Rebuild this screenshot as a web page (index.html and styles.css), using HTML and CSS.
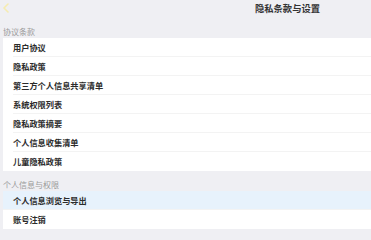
FILE: index.html
```html
<!DOCTYPE html>
<html lang="zh-CN">
<head>
  <meta charset="UTF-8">
  <meta name="viewport" content="width=device-width, initial-scale=1.0">
  <title>隐私条款与设置</title>
  <link rel="stylesheet" href="styles.css">
</head>
<body>
  <div class="header">
    <span class="back">
      <svg width="8" height="10" viewBox="0 0 8 10"><path d="M6 1 L2 5 L6 9" fill="none" stroke="#f6ecb0" stroke-width="1.6" stroke-linecap="round" stroke-linejoin="round"/></svg>
    </span>
    <div class="title">隐私条款与设置</div>
  </div>

  <div class="section-title first">协议条款</div>
  <div class="card">
    <div class="row">用户协议</div>
    <div class="row">隐私政策</div>
    <div class="row">第三方个人信息共享清单</div>
    <div class="row">系统权限列表</div>
    <div class="row">隐私政策摘要</div>
    <div class="row">个人信息收集清单</div>
    <div class="row">儿童隐私政策</div>
  </div>

  <div class="section-title">个人信息与权限</div>
  <div class="card">
    <div class="row active">个人信息浏览与导出</div>
    <div class="row">账号注销</div>
  </div>
</body>
</html>
```

FILE: styles.css
```css
body {
  font-family: 'Noto Sans CJK SC', 'Noto Sans', sans-serif;
  background-color: #efeff3;
  margin: 0;
  padding: 0;
  color: #333;
}
.header {
  display: flex;
  align-items: center;
  height: 16px;
}
.back {
  width: 12px;
  display: flex;
  justify-content: center;
}
.title {
  flex: 1;
  padding-left: 192px;
  text-align: center;
  font-size: 9.3px;
  font-weight: 600;
  line-height: 16px;
}
.section-title {
  padding: 8px 0 0 3px;
  font-size: 8px;
  line-height: 12px;
  color: #9a9a9a;
}
.section-title.first {
  padding-top: 10px;
}
.card {
  background: #fff;
  margin-left: 3px;
}
.row {
  height: 19px;
  line-height: 19px;
  margin-left: 10px;
  font-size: 8.2px;
  font-weight: 600;
  color: #2b2b2b;
  border-bottom: 1px solid #f3f3f3;
  box-sizing: border-box;
}
.row:last-child {
  border-bottom: none;
}
.row.active {
  margin-left: 0;
  padding-left: 10px;
  background: #e7f2fc;
}
```
